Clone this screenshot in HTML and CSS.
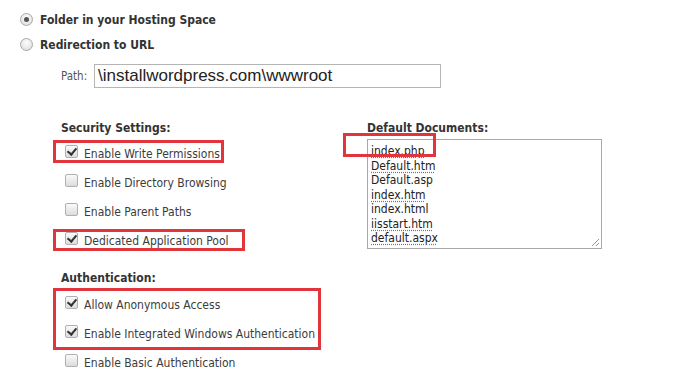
FILE: index.html
```html
<!DOCTYPE html>
<html>
<head>
<meta charset="utf-8">
<link rel="stylesheet" href="styles.css">
</head>
<body>
<div class="page">
  <div class="radio-row"><span class="radio checked"></span><span class="radio-label">Folder in your Hosting Space</span></div>
  <div class="radio-row"><span class="radio"></span><span class="radio-label">Redirection to URL</span></div>
  <div class="path-row"><span class="path-label">Path:</span><div class="path-input">\installwordpress.com\wwwroot</div></div>
  <div class="columns">
    <div class="col-left">
      <div class="section-title">Security Settings:</div>
      <div class="check-row mark mark-a"><span class="cb checked"></span><span>Enable Write Permissions</span></div>
      <div class="check-row"><span class="cb"></span><span>Enable Directory Browsing</span></div>
      <div class="check-row"><span class="cb"></span><span>Enable Parent Paths</span></div>
      <div class="check-row mark mark-b"><span class="cb checked"></span><span>Dedicated Application Pool</span></div>
      <div class="section-title auth-title">Authentication:</div>
      <div class="mark-group">
        <div class="check-row"><span class="cb checked"></span><span>Allow Anonymous Access</span></div>
        <div class="check-row"><span class="cb checked"></span><span>Enable Integrated Windows Authentication</span></div>
      </div>
      <div class="check-row"><span class="cb"></span><span>Enable Basic Authentication</span></div>
    </div>
    <div class="col-right">
      <div class="section-title">Default Documents:</div>
      <div class="docs">
        <div class="doc sq">index.php</div>
        <div class="doc sq">Default.htm</div>
        <div class="doc">Default.asp</div>
        <div class="doc sq">index.htm</div>
        <div class="doc">index.html</div>
        <div class="doc sq">iisstart.htm</div>
        <div class="doc sq">default.aspx</div>
        <svg class="grip" width="10" height="10" viewBox="0 0 10 10"><path d="M9 2 L2 9 M9 6 L6 9" stroke="#999" stroke-width="1"/></svg>
      </div>
      <div class="doc-mark"></div>
    </div>
  </div>
</div>
</body>
</html>
```

FILE: styles.css
```css
html, body {
  margin: 0;
  padding: 0;
  background: #fff;
}
.page {
  padding: 7px 0 0 20px;
  font-family: "DejaVu Sans Condensed", "DejaVu Sans", sans-serif;
  font-stretch: condensed;
  color: #333;
  font-size: 12px;
}
.radio-row {
  display: flex;
  align-items: center;
  height: 25px;
}
.radio {
  width: 11px;
  height: 11px;
  border-radius: 50%;
  border: 1px solid #a9a9a9;
  background: radial-gradient(circle at 50% 35%, #fdfdfd 0%, #e4e4e4 70%, #d6d6d6 100%);
  position: relative;
  margin-right: 7px;
  flex: none;
}
.radio.checked::after {
  content: "";
  position: absolute;
  left: 3px;
  top: 3px;
  width: 5px;
  height: 5px;
  border-radius: 50%;
  background: #555;
}
.radio-label {
  font-weight: bold;
  font-size: 12px;
  color: #333;
}
.path-row {
  display: flex;
  align-items: center;
  margin: 7px 0 0 41px;
  height: 24px;
}
.path-label {
  width: 33px;
  font-size: 11.5px;
  color: #555;
}
.path-input {
  box-sizing: border-box;
  width: 347px;
  height: 24px;
  border: 1px solid #b5b5b5;
  padding: 1px 3px;
  font-family: "Liberation Sans", Arial, sans-serif;
  font-stretch: normal;
  font-size: 17px;
  line-height: 20px;
  color: #222;
}
.columns {
  display: flex;
  margin: 32px 0 0 41px;
}
.col-left {
  width: 306px;
}
.section-title {
  font-weight: bold;
  font-size: 12px;
  line-height: 16px;
  height: 16px;
  color: #333;
}
.check-row {
  display: flex;
  align-items: center;
  height: 29px;
  padding-left: 4px;
  color: #3c3c3c;
  position: relative;
  width: fit-content;
}
.section-title + .check-row {
  margin-top: 3px;
}
.auth-title {
  margin-top: 15px;
  margin-bottom: 4px;
}
.cb {
  box-sizing: border-box;
  width: 13px;
  height: 13px;
  border: 1px solid #b0b0b0;
  border-radius: 2px;
  background: linear-gradient(#fafafa, #dcdcdc);
  margin-right: 6px;
  position: relative;
  flex: none;
  top: -2px;
}
.cb.checked::after {
  content: "";
  position: absolute;
  left: 3px;
  top: 0px;
  width: 4px;
  height: 7px;
  border-right: 2px solid #333;
  border-bottom: 2px solid #333;
  transform: rotate(40deg);
}
.mark::after {
  content: "";
  position: absolute;
  border: 3px solid #e2353b;
  box-sizing: border-box;
}
.mark-a::after {
  left: -8px;
  right: -4px;
  top: 1px;
  bottom: 5px;
}
.mark-b::after {
  left: -8px;
  right: -16px;
  top: 3px;
  bottom: 4px;
}
.mark-group {
  position: relative;
}
.mark-group::after {
  content: "";
  position: absolute;
  left: -8px;
  width: 268px;
  top: -2px;
  bottom: -2px;
  border: 3px solid #e2353b;
  box-sizing: border-box;
}
.col-right {
  position: relative;
}
.docs {
  position: relative;
  box-sizing: border-box;
  width: 235px;
  height: 110px;
  margin-top: 3px;
  border: 1px solid #a8a8a8;
  padding: 4px 3px;
  font-size: 12px;
  line-height: 14.5px;
  color: #222;
}
.doc.sq {
  text-decoration: underline dotted #d84b4b;
  text-underline-offset: 2px;
}
.grip {
  position: absolute;
  right: 1px;
  bottom: 1px;
}
.doc-mark {
  position: absolute;
  left: -24px;
  top: 13px;
  width: 93px;
  height: 24px;
  border: 3px solid #e2353b;
  box-sizing: border-box;
}
```
